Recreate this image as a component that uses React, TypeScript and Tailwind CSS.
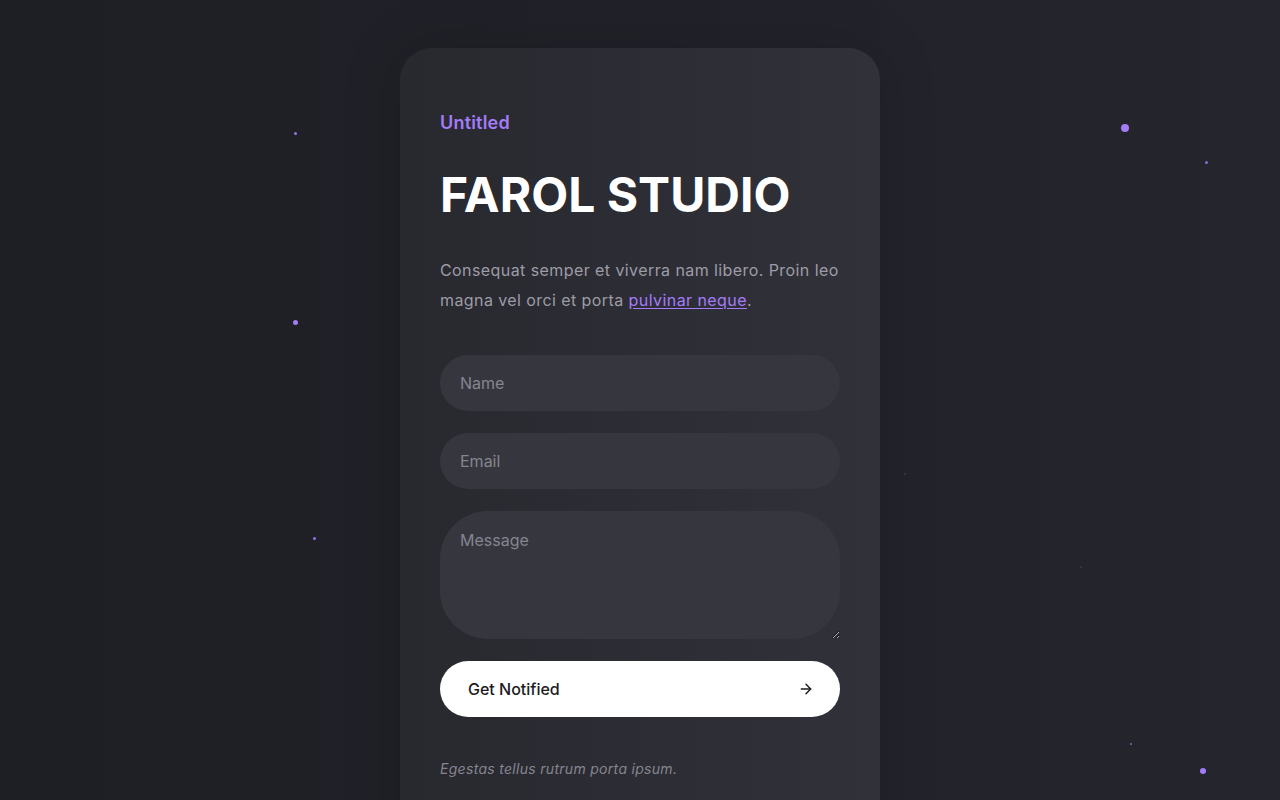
import React from "react";

const dots = [
  { x: 295, y: 133, s: 3, o: 0.9 },
  { x: 295, y: 322, s: 5, o: 1 },
  { x: 314, y: 538, s: 3, o: 0.9 },
  { x: 1125, y: 128, s: 8, o: 1 },
  { x: 1206, y: 162, s: 3, o: 0.8 },
  { x: 1131, y: 744, s: 2, o: 0.7 },
  { x: 1203, y: 771, s: 6, o: 1 },
  { x: 905, y: 474, s: 2, o: 0.25 },
  { x: 1081, y: 567, s: 2, o: 0.2 },
];

export default function App() {
  return (
    <div
      className="relative w-full h-[800px] overflow-hidden bg-gradient-to-r from-[#1e1f25] via-[#212129] to-[#25252e]"
      style={{ fontFamily: "Inter, 'Noto Sans', sans-serif" }}
    >
      {dots.map((d, i) => (
        <span
          key={i}
          className="absolute rounded-full bg-[#a47cf8]"
          style={{
            left: d.x - d.s / 2,
            top: d.y - d.s / 2,
            width: d.s,
            height: d.s,
            opacity: d.o,
          }}
        />
      ))}
      <div className="relative mx-auto mt-12 w-[480px] rounded-t-[32px] bg-gradient-to-r from-[#28282f] to-[#31313a] px-10 pt-[61px] pb-20 shadow-[0_0_60px_rgba(0,0,0,0.15)]">
        <div className="text-[18px] leading-[28px] font-semibold tracking-[0.2px] text-[#a47cf8]">Untitled</div>
        <h1 className="mt-[34px] text-[48px] leading-[48px] font-bold text-white">
          FAROL STUDIO
        </h1>
        <p className="mt-9 w-[410px] text-[16px] leading-[30px] tracking-[0.42px] text-[#9d9ca6]">
          Consequat semper et viverra nam libero. Proin leo magna vel orci et porta{" "}
          <a href="#" className="text-[#a47cf8] underline underline-offset-2">
            pulvinar neque
          </a>
          .
        </p>
        <form className="mt-10 flex flex-col gap-[22px]" onSubmit={(e) => e.preventDefault()}>
          <input
            placeholder="Name"
            className="h-14 w-full rounded-full bg-[#36363f] px-5 text-[16px] text-white placeholder:text-[#85858f] outline-none"
          />
          <input
            placeholder="Email"
            className="h-14 w-full rounded-full bg-[#36363f] px-5 text-[16px] text-white placeholder:text-[#85858f] outline-none"
          />
          <textarea
            placeholder="Message"
            className="block h-32 w-full rounded-[48px] bg-[#36363f] px-5 pt-[17px] pb-4 text-[16px] leading-[24px] text-white placeholder:text-[#85858f] outline-none"
          />
          <button
            type="submit"
            className="flex h-14 w-full items-center justify-between rounded-full bg-white pl-7 pr-[26px] text-[16px] font-medium text-[#1c1c22]"
          >
            <span>Get Notified</span>
            <svg width="16" height="16" viewBox="0 0 24 24" fill="none" stroke="currentColor" strokeWidth="2.2" strokeLinecap="round" strokeLinejoin="round">
              <path d="M5 12h14" />
              <path d="M12 5l7 7-7 7" />
            </svg>
          </button>
        </form>
        <p className="mt-[42px] text-[14px] leading-[20px] italic tracking-[0.3px] text-[#86858f]">
          Egestas tellus rutrum porta ipsum.
        </p>
      </div>
    </div>
  );
}
